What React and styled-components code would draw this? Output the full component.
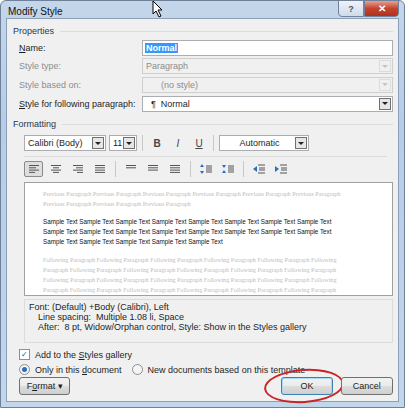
import React from 'react'
import styled, { createGlobalStyle } from 'styled-components'

const Global = createGlobalStyle`
  body { margin: 0; font-family: "Liberation Sans", Arial, sans-serif; font-size: 9px; color: #1e1e1e; }
`

const Frame = styled.div`
  width: 405px;
  height: 408px;
  box-sizing: border-box;
  background: linear-gradient(#c4d6ea, #b7cde6 30%, #c2d6ec);
  border: 1px solid #6d8298;
  border-radius: 6px 6px 0 0;
  display: flex;
  flex-direction: column;
  padding: 0 5px 5px 5px;
  position: relative;
`

const TitleBar = styled.div`
  height: 22px;
  display: flex;
  align-items: flex-start;
  justify-content: space-between;
`

const Title = styled.div`
  font-size: 10px;
  padding: 5px 0 0 2px;
  color: #111;
`

const Caps = styled.div`
  display: flex;
  margin-top: -1px;
`

const Cap = styled.div`
  width: ${(p) => p.w}px;
  height: 15px;
  border: 1px solid #71829a;
  border-radius: ${(p) => p.r};
  background: ${(p) => p.bg};
  color: ${(p) => p.fg};
  font-size: ${(p) => p.fs}px;
  font-weight: bold;
  display: flex;
  align-items: center;
  justify-content: center;
`

const Client = styled.div`
  flex: 1;
  background: #f0f0f0;
  border: 1px solid #8ba0b8;
  display: flex;
  flex-direction: column;
  padding: 5px 5px 6px 6px;
`

const Group = styled.div`
  display: flex;
  align-items: center;
  gap: 6px;
  color: #1e3950;
  height: 14px;
  margin-top: ${(p) => p.mt || 0}px;
  &::after { content: ""; flex: 1; border-top: 1px solid #dcdcdc; }
`

const Row = styled.div`
  display: flex;
  align-items: center;
  height: 18.7px;
  padding-left: 6px;
  &:first-of-type { margin-top: 3px; }
`

const Label = styled.div`
  width: 123px;
  color: ${(p) => (p.dim ? '#8d8d8d' : '#1e1e1e')};
`

const Field = styled.div`
  flex: 1;
  height: 16px;
  box-sizing: border-box;
  border: 1px solid ${(p) => (p.dim ? '#cfcfcf' : '#abadb3')};
  background: ${(p) => (p.dim ? '#f0f0f0' : '#fff')};
  display: flex;
  align-items: center;
  padding-left: ${(p) => p.pl || 3}px;
  color: ${(p) => (p.dim ? '#8d8d8d' : '#1e1e1e')};
  position: relative;
`

const Sel = styled.span`
  background: #3399ff;
  color: #fff;
  font-weight: bold;
  padding: 0 1px;
`

const Arrow = styled.div`
  position: absolute;
  right: 1px;
  top: 1px;
  bottom: 1px;
  width: 12px;
  border: 1px solid ${(p) => (p.dim ? '#dcdcdc' : '#707070')};
  background: ${(p) => (p.dim ? '#f0f0f0' : '#e6e6e6')};
  box-sizing: border-box;
  display: flex;
  align-items: center;
  justify-content: center;
  &::after {
    content: "";
    border: 3px solid transparent;
    border-top: 3px solid ${(p) => (p.dim ? '#c4c4c4' : '#222')};
    margin-top: 3px;
  }
`

const Toolbar = styled.div`
  display: flex;
  align-items: center;
  height: 18px;
  padding-left: 11px;
  gap: ${(p) => p.gap || 4}px;
  margin-top: ${(p) => p.mt || 0}px;
`

const Drop = styled(Field)`
  flex: none;
  width: ${(p) => p.w}px;
  justify-content: ${(p) => (p.center ? 'center' : 'flex-start')};
  padding-right: ${(p) => (p.center ? 12 : 0)}px;
`

const Sep = styled.div`
  width: 1px;
  height: 16px;
  background: #c8c8c8;
  margin: 0 2px;
`

const Tb = styled.div`
  width: ${(p) => p.w || 16}px;
  height: 14px;
  display: flex;
  align-items: center;
  justify-content: center;
  font-weight: ${(p) => (p.b ? 'bold' : 'normal')};
  font-style: ${(p) => (p.i ? 'italic' : 'normal')};
  text-decoration: ${(p) => (p.u ? 'underline' : 'none')};
  font-size: 10px;
  color: #444;
  border: 1px solid ${(p) => (p.on ? '#8b8b8b' : 'transparent')};
  border-radius: 2px;
  background: ${(p) => (p.on ? '#dedede' : 'transparent')};
`

const HLine = styled.div`
  border-top: 1px solid #dcdcdc;
  margin: 4px 6px 3px 11px;
`

const Preview = styled.div`
  margin: 4px 0 0 11px;
  height: 114px;
  background: #fff;
  border: 1px solid #a0a0a0;
  overflow: hidden;
  padding: 6px 0 0 18px;
  box-sizing: border-box;
  font-size: 6.2px;
  line-height: 10px;
`

const Ghost = styled.div`
  font-family: "Liberation Serif", serif;
  color: #bdbdbd;
  width: 310px;
`

const Sample = styled.div`
  color: #111;
  width: 310px;
  margin: 8px 0;
  font-size: 6.3px;
`

const Desc = styled.div`
  margin: 3px 0 0 11px;
  height: 44px;
  box-sizing: border-box;
  border: 1px solid #dcdcdc;
  padding: 2px 4px;
  line-height: 10px;
  div + div { padding-left: 9px; }
`

const Check = styled.div`
  display: flex;
  align-items: center;
  gap: 5px;
  height: 15px;
  padding-left: 6px;
  margin-top: ${(p) => p.mt || 0}px;
`

const Box = styled.div`
  width: 9px;
  height: 9px;
  border: 1px solid #8e8f8f;
  background: #fff;
  font-size: 8px;
  line-height: 9px;
  text-align: center;
  color: #2a4f8c;
`

const Radio = styled.div`
  width: 9px;
  height: 9px;
  border: 1px solid #8e8f8f;
  border-radius: 50%;
  background: #f4f4f4;
  display: flex;
  align-items: center;
  justify-content: center;
  margin-left: ${(p) => p.ml || 0}px;
  &::after {
    content: "";
    width: 5px;
    height: 5px;
    border-radius: 50%;
    background: ${(p) => (p.on ? '#2d6cc4' : 'transparent')};
  }
`

const Buttons = styled.div`
  display: flex;
  align-items: center;
  margin-top: auto;
  padding-left: 6px;
`

const Btn = styled.div`
  width: ${(p) => p.w}px;
  height: 16px;
  border: 1px solid ${(p) => (p.def ? '#3c7fb1' : '#707070')};
  border-radius: 3px;
  background: linear-gradient(#f2f2f2, #ebebeb 50%, #dddddd 51%, #cfcfcf);
  box-shadow: ${(p) => (p.def ? 'inset 0 0 0 1px #a9dbf6' : 'none')};
  display: flex;
  align-items: center;
  justify-content: center;
  margin-left: ${(p) => p.ml || 0}px;
  position: relative;
`

const Ring = styled.div`
  position: absolute;
  left: -18px;
  top: -9px;
  width: 76px;
  height: 30px;
  border: 2px solid #c62626;
  border-radius: 50%;
  transform: rotate(-4deg);
`

const Cursor = styled.svg`
  position: absolute;
  left: 151px;
  top: -1px;
`

const ic = { width: 12, height: 10, viewBox: '0 0 12 10', stroke: '#555', strokeWidth: 1 }
const Lines = ({ rows }) => (
  <svg {...ic}>
    {rows.map(([x1, x2], i) => (
      <line key={i} x1={x1} x2={x2} y1={1.5 + i * 2.3} y2={1.5 + i * 2.3} />
    ))}
  </svg>
)

export default function App() {
  return (
    <>
      <Global />
      <Frame>
        <Cursor width="12" height="18" viewBox="0 0 12 18">
          <path d="M1 1 L1 14 L4 11 L7 17 L9 16 L6 10 L10 10 Z" fill="#fff" stroke="#000" strokeWidth="1" />
        </Cursor>
        <TitleBar>
          <Title>Modify Style</Title>
          <Caps>
            <Cap w={24} r="0 0 0 4px" bg="linear-gradient(#eef3f9,#cfdbe9)" fg="#555" fs={9}>?</Cap>
            <Cap w={33} r="0 0 4px 0" bg="linear-gradient(#e6a193,#c4442f 50%,#b0311e)" fg="#fff" fs={10}>✕</Cap>
          </Caps>
        </TitleBar>
        <Client>
          <Group>Properties</Group>
          <Row>
            <Label><u>N</u>ame:</Label>
            <Field pl={2}><Sel>Normal</Sel></Field>
          </Row>
          <Row>
            <Label dim>Style type:</Label>
            <Field dim>Paragraph<Arrow dim /></Field>
          </Row>
          <Row>
            <Label dim>Style based on:</Label>
            <Field dim pl={18}>(no style)<Arrow dim /></Field>
          </Row>
          <Row>
            <Label><u>S</u>tyle for following paragraph:</Label>
            <Field pl={8}>¶&nbsp;&nbsp;Normal<Arrow /></Field>
          </Row>
          <Group mt={4}>Formatting</Group>
          <Toolbar mt={3} gap={3}>
            <Drop w={82}>Calibri (Body)<Arrow /></Drop>
            <Drop w={28}>11<Arrow /></Drop>
            <Sep />
            <Tb b>B</Tb>
            <Tb i>I</Tb>
            <Tb u>U</Tb>
            <Sep />
            <Drop w={90} center>Automatic<Arrow /></Drop>
          </Toolbar>
          <HLine />
          <Toolbar gap={4}>
            <Tb on w={17}><Lines rows={[[1, 11], [1, 8], [1, 11], [1, 7]]} /></Tb>
            <Tb><Lines rows={[[1, 11], [3, 9], [1, 11], [3, 9]]} /></Tb>
            <Tb><Lines rows={[[1, 11], [4, 11], [1, 11], [5, 11]]} /></Tb>
            <Tb><Lines rows={[[1, 11], [1, 11], [1, 11], [1, 11]]} /></Tb>
            <Sep />
            <Tb><Lines rows={[[1, 11], [1, 11]]} /></Tb>
            <Tb><Lines rows={[[1, 11], [1, 11], [1, 11]]} /></Tb>
            <Tb><Lines rows={[[1, 11], [1, 11], [1, 11], [1, 11]]} /></Tb>
            <Sep />
            <Tb><svg width="12" height="10" viewBox="0 0 12 10"><path d="M2 0 L0 3 H4 Z M2 10 L0 7 H4 Z" fill="#2d6cc4" /><path d="M6 2H12M6 4H12M6 6H12M6 8H12" stroke="#555" /></svg></Tb>
            <Tb><svg width="12" height="10" viewBox="0 0 12 10"><path d="M2 4 L0 1 H4 Z M2 6 L0 9 H4 Z" fill="#2d6cc4" /><path d="M6 2H12M6 4H12M6 6H12M6 8H12" stroke="#555" /></svg></Tb>
            <Sep />
            <Tb><svg width="12" height="10" viewBox="0 0 12 10"><path d="M0 5 L4 2 V8 Z" fill="#2d6cc4" /><path d="M5 1H12M6 4H12M6 6H12M5 9H12" stroke="#555" /></svg></Tb>
            <Tb><svg width="12" height="10" viewBox="0 0 12 10"><path d="M4 5 L0 2 V8 Z" fill="#2d6cc4" /><path d="M5 1H12M6 4H12M6 6H12M5 9H12" stroke="#555" /></svg></Tb>
          </Toolbar>
          <Preview>
            <Ghost>
              Previous Paragraph Previous Paragraph Previous Paragraph Previous Paragraph Previous Paragraph Previous Paragraph Previous Paragraph Previous Paragraph Previous Paragraph
            </Ghost>
            <Sample>
              Sample Text Sample Text Sample Text Sample Text Sample Text Sample Text Sample Text Sample Text Sample Text Sample Text Sample Text Sample Text Sample Text Sample Text Sample Text Sample Text Sample Text Sample Text Sample Text Sample Text Sample Text
            </Sample>
            <Ghost>
              {Array(30).fill('Following Paragraph').join(' ')}
            </Ghost>
          </Preview>
          <Desc>
            <div>Font: (Default) +Body (Calibri), Left</div>
            <div>Line spacing:&nbsp; Multiple 1.08 li, Space</div>
            <div>After:&nbsp; 8 pt, Widow/Orphan control, Style: Show in the Styles gallery</div>
          </Desc>
          <Check mt={4}>
            <Box>✓</Box>
            <span>Add to the <u>S</u>tyles gallery</span>
          </Check>
          <Check>
            <Radio on />
            <span>Only in this <u>d</u>ocument</span>
            <Radio ml={5} />
            <span>New documents based on this template</span>
          </Check>
          <Buttons>
            <Btn w={54}>F<u>o</u>rmat ▾</Btn>
            <Btn w={54} ml={211} def>OK<Ring /></Btn>
            <Btn w={55} ml={8}>Cancel</Btn>
          </Buttons>
        </Client>
      </Frame>
    </>
  )
}
